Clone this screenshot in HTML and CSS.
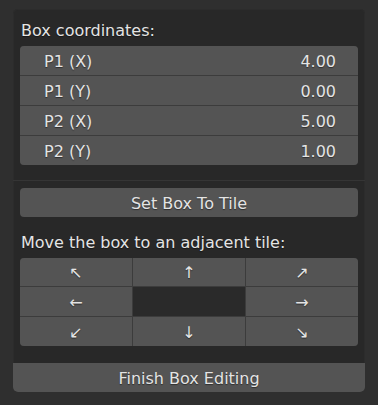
FILE: index.html
```html
<!DOCTYPE html>
<html lang="en">
<head>
  <meta charset="UTF-8">
  <title>Box Editing</title>
  <link rel="stylesheet" href="styles.css">
</head>
<body>

<div class="panel">
  <div class="section">
    <div class="label">Box coordinates:</div>
    <div class="fields">
      <div class="field"><span>P1 (X)</span><span>4.00</span></div>
      <div class="field"><span>P1 (Y)</span><span>0.00</span></div>
      <div class="field"><span>P2 (X)</span><span>5.00</span></div>
      <div class="field"><span>P2 (Y)</span><span>1.00</span></div>
    </div>
  </div>

  <div class="section lower">
    <button class="btn">Set Box To Tile</button>
    <div class="label move">Move the box to an adjacent tile:</div>
    <div class="arrows">
      <button class="cell">&#8598;</button>
      <button class="cell">&#8593;</button>
      <button class="cell">&#8599;</button>
      <button class="cell">&#8592;</button>
      <div class="cell empty"></div>
      <button class="cell">&#8594;</button>
      <button class="cell">&#8601;</button>
      <button class="cell">&#8595;</button>
      <button class="cell">&#8600;</button>
    </div>
  </div>

  <button class="finish">Finish Box Editing</button>
</div>

</body>
</html>
```

FILE: styles.css
```css
* {
  box-sizing: border-box;
  margin: 0;
  padding: 0;
}

body {
  background: #2f2f2f;
  color: #e4e4e4;
  font-family: 'DejaVu Sans', sans-serif;
  font-size: 16px;
  line-height: 19px;
  padding: 9px 13px 0 13px;
  height: 405px;
  overflow: hidden;
}

button {
  font: inherit;
  color: inherit;
  border: none;
  cursor: pointer;
}

.panel {
  width: 352px;
  background: #282828;
  border-radius: 5px;
  box-shadow: inset 0 0 0 1px #2c2c2c;
}

.label,
.field,
.btn,
.cell,
.finish {
  text-shadow: 0 1px 1px rgba(0, 0, 0, 0.45);
}

.section {
  padding: 12px 7px 15px;
  border-bottom: 1px solid #353535;
}

.section.lower {
  padding-top: 7px;
  padding-bottom: 17px;
  border-bottom: none;
}

.label {
  padding-left: 1px;
}

.fields {
  margin-top: 6px;
  display: flex;
  flex-direction: column;
  gap: 1px;
  background: #3c3c3c;
  border-radius: 4px;
  overflow: hidden;
}

.field {
  height: 29px;
  display: flex;
  justify-content: space-between;
  align-items: center;
  padding: 1px 22px 0 24px;
  background: #545454;
}

.btn {
  display: block;
  width: 100%;
  height: 29px;
  padding-top: 1px;
  background: #545454;
  border-radius: 4px;
}

.move {
  margin-top: 16px;
}

.arrows {
  margin-top: 6px;
  display: grid;
  grid-template-columns: 1fr 1fr 1fr;
  grid-template-rows: 28px 29px 29px;
  gap: 1px;
  background: #3c3c3c;
  border-radius: 4px;
  overflow: hidden;
}

.cell {
  background: #545454;
  padding-top: 1px;
}

.cell.empty {
  background: #2a2a2a;
}

.finish {
  display: block;
  width: 100%;
  height: 29px;
  padding-top: 1px;
  background: #545454;
  border-radius: 0 0 5px 5px;
}
```
